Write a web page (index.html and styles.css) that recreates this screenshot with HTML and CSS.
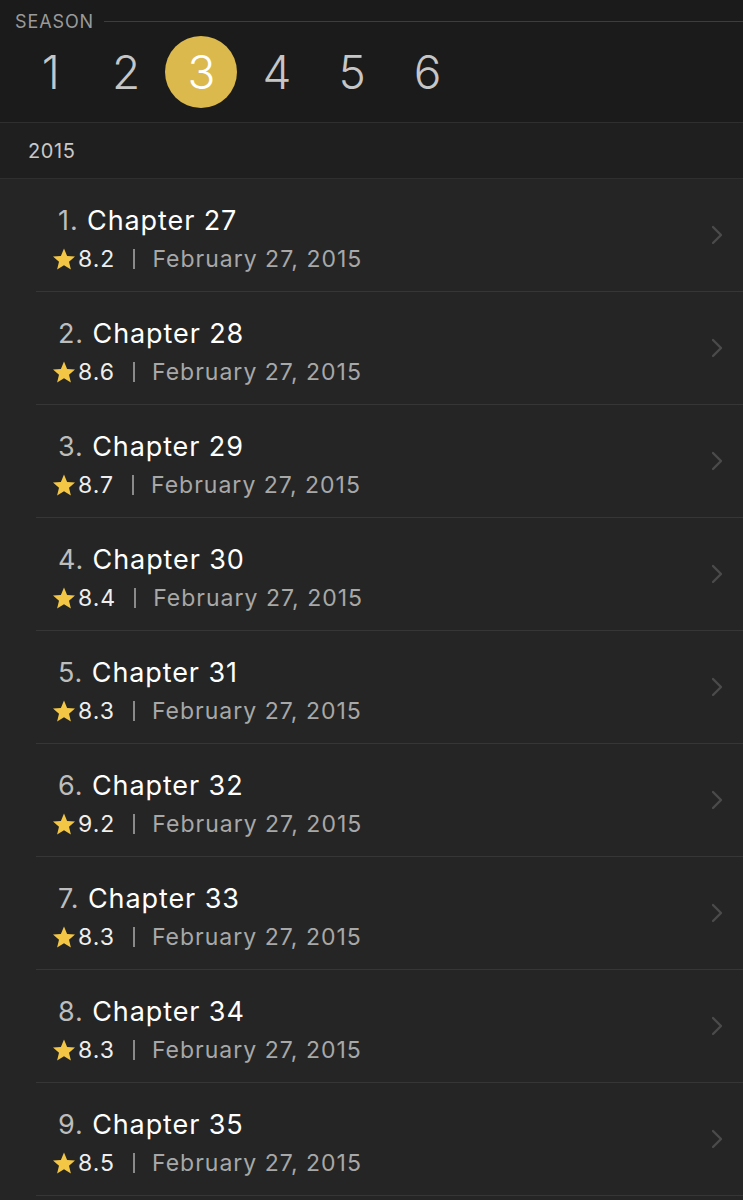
FILE: index.html
```html
<!DOCTYPE html>
<html lang="en">
<head>
  <meta charset="UTF-8" />
  <meta name="viewport" content="width=device-width, initial-scale=1.0"/>
  <title>Season 3 - Episodes</title>
  <link rel="stylesheet" href="styles.css">
</head>
<body>
  <div class="season-bar">
    <div class="season-head">
      <span class="season-label">SEASON</span>
      <span class="season-line"></span>
    </div>
    <div class="season-list">
      <span class="season-num">1</span>
      <span class="season-num">2</span>
      <span class="season-num active">3</span>
      <span class="season-num">4</span>
      <span class="season-num">5</span>
      <span class="season-num">6</span>
    </div>
  </div>

  <div class="year-bar">2015</div>

  <ul class="episodes">
    <li class="episode">
      <div class="ep-text">
        <div class="ep-title"><span class="ep-no">1.</span> Chapter 27</div>
        <div class="ep-meta"><svg class="star" viewBox="0 0 24 24"><path d="M12 1.5l3.1 7.4 7.9.6-6 5.2 1.9 7.8L12 18.3l-6.9 4.2L7 14.7 1 9.5l7.9-.6z"/></svg><span class="rating">8.2</span><span class="sep"></span>February 27, 2015</div>
      </div>
      <svg class="chevron" viewBox="0 0 12 20"><path d="M2 2l8 8-8 8"/></svg>
    </li>
    <li class="episode">
      <div class="ep-text">
        <div class="ep-title"><span class="ep-no">2.</span> Chapter 28</div>
        <div class="ep-meta"><svg class="star" viewBox="0 0 24 24"><path d="M12 1.5l3.1 7.4 7.9.6-6 5.2 1.9 7.8L12 18.3l-6.9 4.2L7 14.7 1 9.5l7.9-.6z"/></svg><span class="rating">8.6</span><span class="sep"></span>February 27, 2015</div>
      </div>
      <svg class="chevron" viewBox="0 0 12 20"><path d="M2 2l8 8-8 8"/></svg>
    </li>
    <li class="episode">
      <div class="ep-text">
        <div class="ep-title"><span class="ep-no">3.</span> Chapter 29</div>
        <div class="ep-meta"><svg class="star" viewBox="0 0 24 24"><path d="M12 1.5l3.1 7.4 7.9.6-6 5.2 1.9 7.8L12 18.3l-6.9 4.2L7 14.7 1 9.5l7.9-.6z"/></svg><span class="rating">8.7</span><span class="sep"></span>February 27, 2015</div>
      </div>
      <svg class="chevron" viewBox="0 0 12 20"><path d="M2 2l8 8-8 8"/></svg>
    </li>
    <li class="episode">
      <div class="ep-text">
        <div class="ep-title"><span class="ep-no">4.</span> Chapter 30</div>
        <div class="ep-meta"><svg class="star" viewBox="0 0 24 24"><path d="M12 1.5l3.1 7.4 7.9.6-6 5.2 1.9 7.8L12 18.3l-6.9 4.2L7 14.7 1 9.5l7.9-.6z"/></svg><span class="rating">8.4</span><span class="sep"></span>February 27, 2015</div>
      </div>
      <svg class="chevron" viewBox="0 0 12 20"><path d="M2 2l8 8-8 8"/></svg>
    </li>
    <li class="episode">
      <div class="ep-text">
        <div class="ep-title"><span class="ep-no">5.</span> Chapter 31</div>
        <div class="ep-meta"><svg class="star" viewBox="0 0 24 24"><path d="M12 1.5l3.1 7.4 7.9.6-6 5.2 1.9 7.8L12 18.3l-6.9 4.2L7 14.7 1 9.5l7.9-.6z"/></svg><span class="rating">8.3</span><span class="sep"></span>February 27, 2015</div>
      </div>
      <svg class="chevron" viewBox="0 0 12 20"><path d="M2 2l8 8-8 8"/></svg>
    </li>
    <li class="episode">
      <div class="ep-text">
        <div class="ep-title"><span class="ep-no">6.</span> Chapter 32</div>
        <div class="ep-meta"><svg class="star" viewBox="0 0 24 24"><path d="M12 1.5l3.1 7.4 7.9.6-6 5.2 1.9 7.8L12 18.3l-6.9 4.2L7 14.7 1 9.5l7.9-.6z"/></svg><span class="rating">9.2</span><span class="sep"></span>February 27, 2015</div>
      </div>
      <svg class="chevron" viewBox="0 0 12 20"><path d="M2 2l8 8-8 8"/></svg>
    </li>
    <li class="episode">
      <div class="ep-text">
        <div class="ep-title"><span class="ep-no">7.</span> Chapter 33</div>
        <div class="ep-meta"><svg class="star" viewBox="0 0 24 24"><path d="M12 1.5l3.1 7.4 7.9.6-6 5.2 1.9 7.8L12 18.3l-6.9 4.2L7 14.7 1 9.5l7.9-.6z"/></svg><span class="rating">8.3</span><span class="sep"></span>February 27, 2015</div>
      </div>
      <svg class="chevron" viewBox="0 0 12 20"><path d="M2 2l8 8-8 8"/></svg>
    </li>
    <li class="episode">
      <div class="ep-text">
        <div class="ep-title"><span class="ep-no">8.</span> Chapter 34</div>
        <div class="ep-meta"><svg class="star" viewBox="0 0 24 24"><path d="M12 1.5l3.1 7.4 7.9.6-6 5.2 1.9 7.8L12 18.3l-6.9 4.2L7 14.7 1 9.5l7.9-.6z"/></svg><span class="rating">8.3</span><span class="sep"></span>February 27, 2015</div>
      </div>
      <svg class="chevron" viewBox="0 0 12 20"><path d="M2 2l8 8-8 8"/></svg>
    </li>
    <li class="episode">
      <div class="ep-text">
        <div class="ep-title"><span class="ep-no">9.</span> Chapter 35</div>
        <div class="ep-meta"><svg class="star" viewBox="0 0 24 24"><path d="M12 1.5l3.1 7.4 7.9.6-6 5.2 1.9 7.8L12 18.3l-6.9 4.2L7 14.7 1 9.5l7.9-.6z"/></svg><span class="rating">8.5</span><span class="sep"></span>February 27, 2015</div>
      </div>
      <svg class="chevron" viewBox="0 0 12 20"><path d="M2 2l8 8-8 8"/></svg>
    </li>
  </ul>
</body>
</html>
```

FILE: styles.css
```css
* { box-sizing: border-box; margin: 0; padding: 0; }
body {
  background: #252525;
  color: #fff;
  font-family: Inter, "Liberation Sans", sans-serif;
}

/* season picker */
.season-bar {
  background: #1b1b1b;
  height: 123px;
  border-bottom: 1px solid #2f2f2f;
  padding-top: 10px;
}
.season-head {
  display: flex;
  align-items: center;
  padding-left: 15px;
  height: 22px;
}
.season-label {
  font-size: 18px;
  color: #9a9a9a;
  letter-spacing: 0.9px;
}
.season-line {
  flex: 1;
  height: 1px;
  background: #3d3d3d;
  margin-left: 10px;
}
.season-list {
  display: flex;
  padding-left: 13px;
  margin-top: 4px;
}
.season-num {
  width: 75.4px;
  height: 72px;
  display: flex;
  align-items: center;
  justify-content: center;
  font-size: 46px;
  font-weight: 300;
  color: #c6c6c6;
}
.season-num.active {
  width: 72px;
  margin: 0 1.7px;
  border-radius: 50%;
  background: #dcb94c;
  color: #fff;
}

/* year header */
.year-bar {
  background: #1f1f1f;
  height: 56px;
  border-bottom: 1px solid #2f2f2f;
  padding-left: 28px;
  display: flex;
  align-items: center;
  font-size: 20px;
  letter-spacing: 0.6px;
  color: #c8c8c8;
}

/* episode list */
.episodes { list-style: none; }
.episode {
  margin-left: 36px;
  height: 113px;
  border-bottom: 1px solid #363636;
  display: flex;
  align-items: center;
  justify-content: space-between;
  padding-right: 20px;
}
.ep-text { padding-top: 8px; }
.ep-title {
  padding-left: 22px;
  font-size: 27px;
  line-height: 34px;
  letter-spacing: 0.9px;
  color: #fff;
}
.ep-no { color: #bdbdbd; }
.ep-meta {
  display: flex;
  align-items: center;
  padding-left: 16px;
  margin-top: 5px;
  font-size: 23px;
  line-height: 32px;
  letter-spacing: 1px;
  color: #a8a8a8;
}
.star {
  width: 24px;
  height: 24px;
  fill: #f3c745;
  margin-right: 2px;
}
.rating { color: #eee; }
.sep {
  display: inline-block;
  width: 2px;
  height: 20px;
  margin: 0 17px 0 18px;
  background: #8a8a8a;
}
.chevron {
  width: 12px;
  height: 20px;
  fill: none;
  stroke: #4b4b4b;
  stroke-width: 2.4;
  stroke-linecap: round;
  stroke-linejoin: round;
}
```
